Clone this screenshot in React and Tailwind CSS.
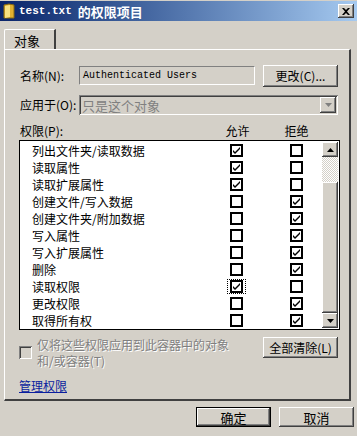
import React from "react";

const raised =
  "shadow-[inset_-1px_-1px_#404040,inset_1px_1px_#ffffff,inset_-2px_-2px_#808080,inset_2px_2px_#d4d0c8]";
const sunken =
  "shadow-[inset_1px_1px_#808080,inset_-1px_-1px_#ffffff,inset_2px_2px_#404040,inset_-2px_-2px_#d4d0c8]";

const font = { fontFamily: '"Noto Sans CJK SC", "Liberation Sans", sans-serif' };

const perms = [
  ["列出文件夹/读取数据", true, false],
  ["读取属性", true, false],
  ["读取扩展属性", true, false],
  ["创建文件/写入数据", false, true],
  ["创建文件夹/附加数据", false, true],
  ["写入属性", false, true],
  ["写入扩展属性", false, true],
  ["删除", false, true],
  ["读取权限", true, false],
  ["更改权限", false, true],
  ["取得所有权", false, true],
];

function Box({ checked, focus }) {
  return (
    <div
      className={
        "w-[19px] h-[15px] flex items-center justify-center " +
        (focus ? "outline outline-1 outline-dotted outline-black -outline-offset-1" : "")
      }
    >
      <div className="w-[13px] h-[13px] border-2 border-black bg-white flex items-center justify-center">
        {checked && (
          <svg width="9" height="9" viewBox="0 0 9 9">
            <path d="M1 4 L3 6 L8 1 L8 3 L3 8 L1 6 Z" fill="#000" />
          </svg>
        )}
      </div>
    </div>
  );
}

function Button({ children, def, className = "" }) {
  return (
    <div
      className={
        "flex items-center justify-center bg-[#d4d0c8] text-[12px] leading-none text-black " +
        (def
          ? "border border-black shadow-[inset_-1px_-1px_#404040,inset_1px_1px_#ffffff,inset_-2px_-2px_#808080] "
          : raised + " ") +
        className
      }
    >
      {children}
    </div>
  );
}

function Folder() {
  return (
    <svg width="12" height="16" viewBox="0 0 12 16">
      <path d="M1 2 L6 1 L11 2 L11 15 L1 15 Z" fill="#e0b030" stroke="#8a6a10" strokeWidth="1" />
      <path d="M2 3 L7 2 L7 14 L2 15 Z" fill="#f8e080" />
    </svg>
  );
}

export default function App() {
  return (
    <div
      className="w-[357px] h-[436px] bg-[#d4d0c8] flex flex-col text-[12px] text-black overflow-hidden"
      style={font}
    >
      {/* title bar */}
      <div className="mt-[1px] h-[20px] flex items-center bg-gradient-to-r from-[#0a246a] to-[#a6caf0]">
        <div className="ml-[3px] w-[12px] flex items-center">
          <Folder />
        </div>
        <div className="ml-[4px] text-white font-bold leading-none flex items-center gap-[6px]">
          <span style={{ fontFamily: '"Liberation Mono", monospace' }} className="text-[11px]">
            test.txt
          </span>
          <span className="text-[13px]">的权限项目</span>
        </div>
        <div className="flex-1" />
        <div className={"mr-[3px] w-[16px] h-[14px] bg-[#d4d0c8] flex items-center justify-center " + raised}>
          <svg width="8" height="7" viewBox="0 0 8 7">
            <path d="M0 0 L2 0 L4 2 L6 0 L8 0 L5 3.5 L8 7 L6 7 L4 5 L2 7 L0 7 L3 3.5 Z" fill="#000" />
          </svg>
        </div>
      </div>

      {/* tabs */}
      <div className="mt-[8px] pl-[4px] flex">
        <div className="w-[52px] h-[21px] border-t border-l border-white border-r-2 border-r-[#404040] rounded-tl-[2px] flex items-center pl-[9px] text-[13px] leading-none bg-[#d4d0c8]">
          对象
        </div>
      </div>

      {/* panel */}
      <div className="ml-[4px] w-[347px] h-[352px] border-l border-t border-white border-r-2 border-b-2 border-r-[#404040] border-b-[#404040] -mt-[1px] flex flex-col pl-[14px] pr-[10px]">
        {/* name row */}
        <div className="mt-[15px] h-[21px] flex items-center">
          <div className="w-[60px] pl-[1px] leading-none">名称(N):</div>
          <div className="w-[176px] h-[19px] bg-[#d4d0c8] flex items-center pl-[3px] border border-[#808080] border-r-white border-b-white">
            <span style={{ fontFamily: '"Liberation Mono", monospace' }} className="text-[10px] leading-none">
              Authenticated Users
            </span>
          </div>
          <Button className="ml-[8px] w-[75px] h-[22px]">更改(C)...</Button>
        </div>

        {/* apply row */}
        <div className="mt-[9px] h-[20px] flex items-center">
          <div className="w-[60px] pl-[1px] leading-none">应用于(O):</div>
          <div className={"w-[259px] h-[20px] bg-[#d4d0c8] flex items-center pl-[3px] text-[#808080] " + sunken}>
            <span className="flex-1 text-[13px] leading-none">只是这个对象</span>
            <div className={"mr-[2px] w-[16px] h-[16px] flex items-center justify-center " + raised}>
              <svg width="7" height="4" viewBox="0 0 7 4">
                <path d="M0 0 L7 0 L3.5 4 Z" fill="#808080" />
              </svg>
            </div>
          </div>
        </div>

        {/* header */}
        <div className="mt-[8px] h-[16px] flex items-center leading-none">
          <div className="w-[201px] pl-[1px]">权限(P):</div>
          <div className="w-[35px] text-center">允许</div>
          <div className="ml-[24px] w-[35px] text-center">拒绝</div>
        </div>

        {/* list */}
        <div className="mt-[1px] w-[321px] h-[190px] border border-black bg-white flex">
          <div className="flex-1 flex flex-col pt-[1px]">
            {perms.map(([name, a, d], i) => (
              <div key={i} className="h-[17px] flex items-center">
                <div className="w-[207px] pl-[12px] text-[12px] leading-[14px]">{name}</div>
                <Box checked={a} focus={i === 8} />
                <div className="w-[41px]" />
                <Box checked={d} />
              </div>
            ))}
          </div>
          <div className="w-[16px] mr-[1px] flex flex-col pt-[1px] pb-[1px]">
            <div className={"h-[15px] bg-[#d4d0c8] flex items-center justify-center " + raised}>
              <svg width="7" height="4" viewBox="0 0 7 4">
                <path d="M0 4 L7 4 L3.5 0 Z" fill="#000" />
              </svg>
            </div>
            <div className="h-[25px] bg-[repeating-conic-gradient(#d4d0c8_0%_25%,#ffffff_0%_50%)] bg-[length:2px_2px]" />
            <div className={"flex-1 bg-[#d4d0c8] " + raised} />
            <div className={"h-[15px] bg-[#d4d0c8] flex items-center justify-center " + raised}>
              <svg width="7" height="4" viewBox="0 0 7 4">
                <path d="M0 0 L7 0 L3.5 4 Z" fill="#000" />
              </svg>
            </div>
          </div>
        </div>

        {/* inherit checkbox row */}
        <div className="mt-[7px] flex items-start">
          <div className={"mt-[9px] w-[13px] h-[13px] bg-[#d4d0c8] " + sunken} />
          <div className="ml-[5px] w-[204px] text-[12px] leading-[16px] text-[#808080] whitespace-nowrap [text-shadow:1px_1px_#ffffff]">
            仅将这些权限应用到此容器中的对象
            <br />
            和/或容器(T)
          </div>
          <div className="flex-1" />
          <Button className="w-[75px] h-[21px] mr-[1px]">全部清除(L)</Button>
        </div>

        {/* link */}
        <div className="mt-[11px] text-[12px] text-[#0a1e9e] underline leading-none">管理权限</div>
      </div>

      {/* bottom buttons */}
      <div className="mt-[6px] flex justify-end pr-[3px] gap-[8px]">
        <Button def className="w-[75px] h-[20px] text-[13px]">确定</Button>
        <Button className="w-[75px] h-[20px] text-[13px]">取消</Button>
      </div>
    </div>
  );
}
